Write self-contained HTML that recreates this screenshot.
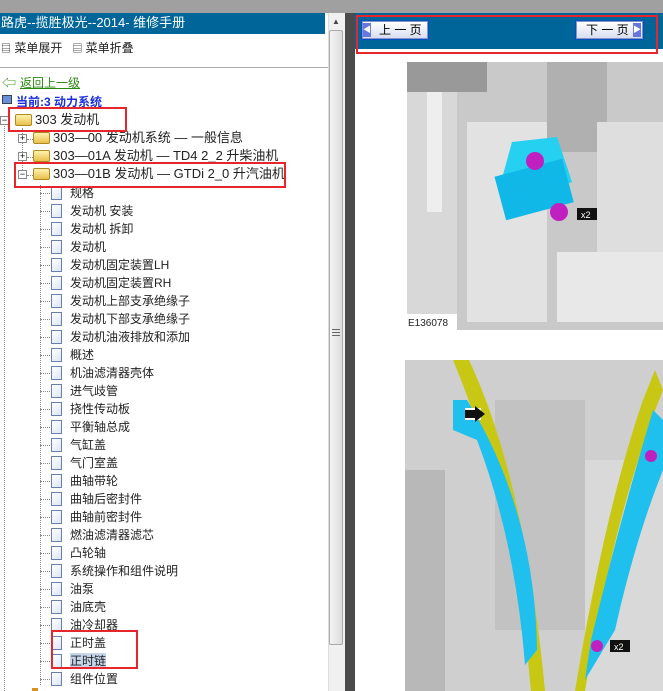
<!DOCTYPE html>
<html><head><meta charset="utf-8">
<style>
*{margin:0;padding:0;box-sizing:border-box}
body{width:663px;height:691px;overflow:hidden;background:#fff;position:relative;font-family:"Liberation Sans","Noto Sans CJK SC",sans-serif;font-size:12px;color:#222}
.a{position:absolute}
.t{position:absolute;white-space:nowrap;line-height:16px}
.leaf{position:absolute;width:11px;height:14px;background:linear-gradient(135deg,#fff,#dde6f5);border:1px solid #6a7fb0}
.fold{position:absolute;width:17px;height:12px;background:linear-gradient(#fff3b0,#e8c14a);border:1px solid #b08a20;border-radius:2px}
.pm{position:absolute;width:9px;height:9px;border:1px solid #888;background:#fff;font-size:9px;line-height:7px;text-align:center;color:#000}
.dl{position:absolute;border-top:1px dotted #888;width:14px}
.red{position:absolute;border:2px solid #e8252b}
</style></head><body>
<div class="a" style="left:0;top:0;width:663px;height:13px;background:#a0a0a0"></div>
<!-- left header -->
<div class="a" style="left:0;top:13px;width:325px;height:21px;background:#006699"></div>
<div class="t" style="left:1px;top:15px;color:#fff;font-size:13px">路虎--揽胜极光--2014- 维修手册</div>
<div class="t" style="left:1px;top:40px;font-size:12px"><span style="font-size:10px">▤</span> 菜单展开 &nbsp; <span style="font-size:10px">▤</span> 菜单折叠</div>
<div class="a" style="left:0;top:67px;width:328px;height:1px;background:#aaa"></div>
<div class="t" style="left:2px;top:75px;color:#3a9a20;font-size:14px">⇦</div>
<div class="t" style="left:20px;top:75px;color:#2a8a10;text-decoration:underline">返回上一级</div>
<div class="a" style="left:2px;top:95px;width:10px;height:9px;background:#6a8fd8;border:1px solid #345"></div>
<div class="t" style="left:16px;top:94px;color:#1a2ee0;font-weight:bold;text-decoration:underline">当前:3 动力系统</div>
<!-- dotted verticals -->
<div class="a" style="left:4px;top:120px;height:571px;border-left:1px dotted #888"></div>
<div class="a" style="left:22px;top:128px;height:50px;border-left:1px dotted #888"></div>
<div class="a" style="left:40px;top:185px;height:500px;border-left:1px dotted #888"></div>
<div class="pm" style="left:0;top:116px">−</div>
<div class="fold" style="left:15px;top:114px"></div>
<div class="t" style="left:35px;top:112px;font-size:13px">303 发动机</div>
<div class="pm" style="left:18px;top:134px">+</div><div class="dl" style="left:27px;top:139px;width:6px"></div>
<div class="fold" style="left:33px;top:132px"></div>
<div class="t" style="left:53px;top:130px;font-size:13px">303—00 发动机系统 — 一般信息</div>
<div class="pm" style="left:18px;top:152px">+</div><div class="dl" style="left:27px;top:157px;width:6px"></div>
<div class="fold" style="left:33px;top:150px"></div>
<div class="t" style="left:53px;top:148px;font-size:13px">303—01A 发动机 — TD4 2_2 升柴油机</div>
<div class="pm" style="left:18px;top:170px">−</div><div class="dl" style="left:27px;top:175px;width:6px"></div>
<div class="fold" style="left:33px;top:168px"></div>
<div class="t" style="left:53px;top:166px;font-size:13px">303—01B 发动机 — GTDi 2_0 升汽油机</div>
<div id="leaves"></div>
<div class="red" style="left:8px;top:107px;width:119px;height:25px"></div>
<div class="red" style="left:14px;top:162px;width:272px;height:26px"></div>
<div class="red" style="left:51px;top:630px;width:87px;height:39px"></div>
<div class="a" style="left:32px;top:688px;width:6px;height:3px;background:#d89020"></div>
<!-- scrollbar -->
<div class="a" style="left:328px;top:13px;width:17px;height:678px;background:#f0f0f0;border-left:1px solid #ddd"></div>
<div class="t" style="left:332px;top:14px;font-size:8px;color:#444">▲</div>
<div class="a" style="left:329px;top:30px;width:14px;height:615px;background:linear-gradient(90deg,#f4f4f4,#dcdcdc);border:1px solid #aaa;border-radius:2px"></div>
<div class="a" style="left:332px;top:329px;width:8px;height:7px;border-top:1px solid #666;border-bottom:1px solid #666"></div>
<div class="a" style="left:332px;top:332px;width:8px;height:1px;background:#666"></div>
<div class="a" style="left:345px;top:13px;width:10px;height:678px;background:#4b4b4b"></div>
<!-- right nav -->
<div class="a" style="left:355px;top:13px;width:308px;height:37px;background:#006699"></div>
<div class="a" style="left:355px;top:49px;width:308px;height:2px;background:#fff"></div>
<div class="red" style="left:356px;top:15px;width:302px;height:39px"></div>
<div class="a" style="left:361px;top:20px;width:68px;height:20px;background:#0050c0;padding:1px"><div style="width:100%;height:100%;background:linear-gradient(#fff,#d8def0);border:1px solid #8894c8;font-size:12px;line-height:16px;color:#000;padding-left:16px">上 一 页</div></div>
<div class="a" style="left:363px;top:23px;width:8px;height:14px;background:#6677dd;color:#fff;font-size:8px;line-height:14px">◀</div>
<div class="a" style="left:575px;top:20px;width:69px;height:20px;background:#0050c0;padding:1px"><div style="width:100%;height:100%;background:linear-gradient(#fff,#d8def0);border:1px solid #8894c8;font-size:12px;line-height:16px;color:#000;padding-left:9px">下 一 页</div></div>
<div class="a" style="left:633px;top:23px;width:8px;height:14px;background:#6677dd;color:#fff;font-size:8px;line-height:14px">▶</div>
<!-- image 1 -->
<svg class="a" style="left:407px;top:62px" width="256" height="268">
<rect width="256" height="268" fill="#c9c9c9"/>
<rect x="0" y="0" width="50" height="260" fill="#d8d8d8"/>
<rect x="20" y="0" width="15" height="150" fill="#eee"/>
<rect x="60" y="60" width="80" height="200" fill="#e2e2e2"/>
<rect x="140" y="0" width="60" height="90" fill="#b0b0b0"/>
<rect x="190" y="60" width="66" height="140" fill="#dedede"/>
<rect x="150" y="190" width="106" height="70" fill="#e8e8e8"/>
<rect x="0" y="0" width="80" height="30" fill="#999"/>
<polygon points="105,80 150,75 165,120 118,140 94,120" fill="#25d0f0"/>
<rect x="92" y="105" width="70" height="45" fill="#10b8e8" transform="rotate(-15 127 127)"/>
<circle cx="128" cy="99" r="9" fill="#c020c0"/>
<circle cx="152" cy="150" r="9" fill="#c020c0"/>
<rect x="170" y="146" width="20" height="12" fill="#111"/>
<text x="174" y="156" fill="#fff" font-size="9" font-family="Liberation Sans">x2</text>
<rect x="0" y="252" width="50" height="16" fill="#fff"/>
<text x="1" y="264" font-size="10" fill="#222" font-family="Liberation Sans">E136078</text>
</svg>
<!-- image 2 -->
<svg class="a" style="left:405px;top:360px" width="258" height="331">
<rect width="258" height="331" fill="#cfcfcf"/>
<rect x="0" y="110" width="40" height="221" fill="#b8b8b8"/>
<rect x="180" y="100" width="78" height="231" fill="#d9d9d9"/>
<rect x="90" y="40" width="90" height="230" fill="#c2c2c2"/>
<path d="M48,0 L64,0 Q120,120 140,331 L126,331 Q110,150 48,0Z" fill="#c8c814"/>
<path d="M250,10 L238,40 Q200,150 170,331 L180,331 Q210,150 258,30Z" fill="#c8c814"/>
<path d="M48,40 L62,40 Q130,150 132,290 L120,305 Q110,180 72,80 L48,70Z" fill="#20c0ee"/>
<path d="M248,50 L258,60 L258,110 Q230,180 210,270 L180,320 L186,280 Q215,160 248,50Z" fill="#20c0ee"/>
<rect x="60" y="48" width="16" height="12" fill="#fff"/>
<polygon points="60,50 70,50 70,46 80,54 70,62 70,58 60,58" fill="#111"/>
<circle cx="246" cy="96" r="6" fill="#c020c0"/>
<circle cx="192" cy="286" r="6" fill="#c020c0"/>
<rect x="205" y="280" width="20" height="12" fill="#111"/>
<text x="209" y="290" fill="#fff" font-size="9" font-family="Liberation Sans">x2</text>
</svg>
<script>
var n=["规格","发动机 安装","发动机 拆卸","发动机","发动机固定装置LH","发动机固定装置RH","发动机上部支承绝缘子","发动机下部支承绝缘子","发动机油液排放和添加","概述","机油滤清器壳体","进气歧管","挠性传动板","平衡轴总成","气缸盖","气门室盖","曲轴带轮","曲轴后密封件","曲轴前密封件","燃油滤清器滤芯","凸轮轴","系统操作和组件说明","油泵","油底壳","油冷却器","正时盖","正时链","组件位置"];
var h="";n.forEach(function(s,i){var y=186+i*18;h+='<div class="dl" style="left:40px;top:'+(y+7)+'px;width:10px"></div><div class="leaf" style="left:51px;top:'+y+'px"></div><div class="t" style="left:70px;top:'+(y-1)+'px;'+(i==26?'background:#c5d5ea;':'')+'">'+s+'</div>';});
document.getElementById("leaves").innerHTML=h;
</script>
</body></html>
